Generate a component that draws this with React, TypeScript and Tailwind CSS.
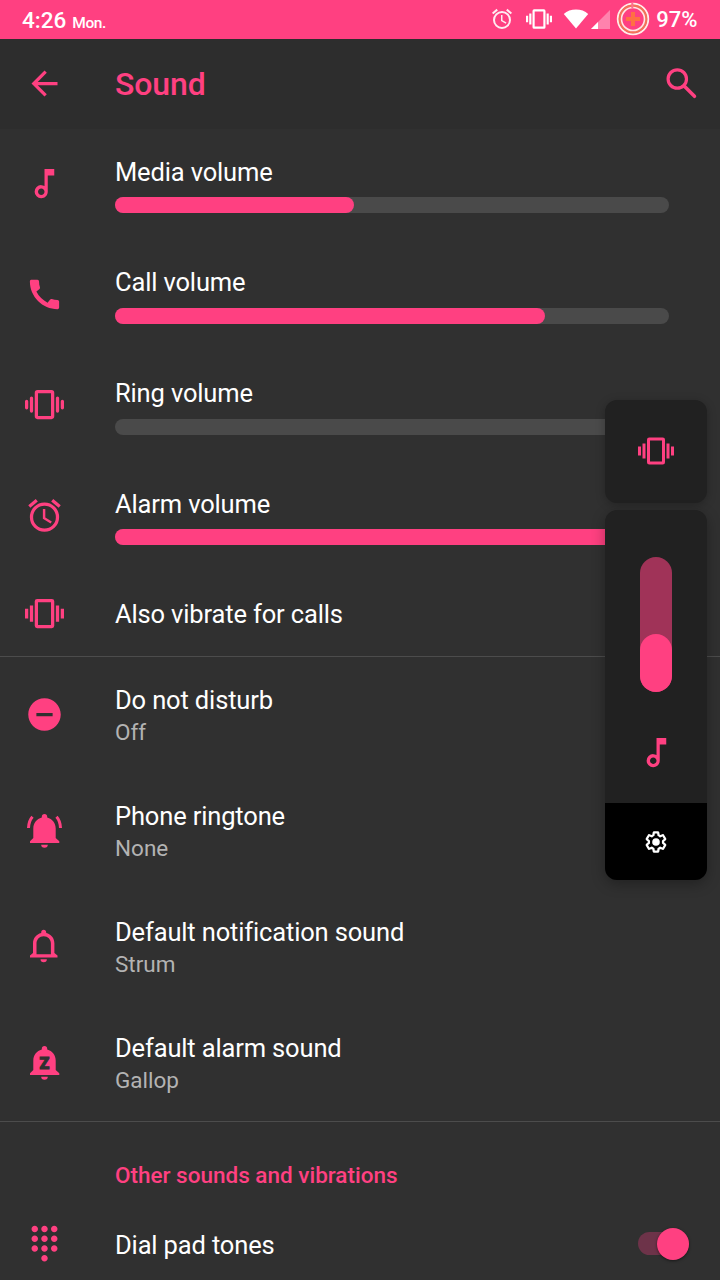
import type { ReactNode } from "react";
import { MdArrowBack, MdCall, MdDialpad, MdOutlineMusicNote, MdRemoveCircle } from "react-icons/md";

const iconClass = "w-[39px] h-[39px]";
const titleClass = "text-[25.5px] leading-[30px] tracking-[-0.15px]";

function AlarmIcon({ className }: { className: string }) {
  return (
    <svg viewBox="0 0 24 24" fill="currentColor" className={className}>
      <path d="M12 20a7 7 0 0 1-7-7 7 7 0 0 1 7-7 7 7 0 0 1 7 7 7 7 0 0 1-7 7m0-16a9 9 0 0 0-9 9 9 9 0 0 0 9 9 9 9 0 0 0 9-9 9 9 0 0 0-9-9m.5 4H11v6l4.75 2.85.75-1.23-4-2.37V8M7.88 3.39L6.6 1.86 2 5.71l1.29 1.53 4.59-3.85M22 5.72l-4.6-3.86-1.29 1.53 4.6 3.86L22 5.72z" />
    </svg>
  );
}

// Phone with rounded vibration bars
function RingVibrateIcon() {
  return (
    <svg viewBox="0 0 24 24" fill="none" stroke="currentColor" strokeWidth="2" strokeLinecap="round" className="-mt-px h-[39px] w-[39px]">
      <rect x="7" y="4" width="10" height="16" rx="0.7" />
      <path d="M1 10v4M4 8v8M20 8v8M23 10v4" />
    </svg>
  );
}

// Phone with square vibration bars
function VibrateIcon({ className }: { className: string }) {
  return (
    <svg viewBox="0 0 24 24" fill="none" stroke="currentColor" strokeWidth="2" className={className}>
      <rect x="7" y="4" width="10" height="16" rx="0.5" />
      <path d="M1 9v6M4 7v10M20 7v10M23 9v6" />
    </svg>
  );
}

const bellBody =
  "M19.5 3c-1.6 0-2.7 1.1-2.7 2.7v.9C11.6 8 8.3 12.2 8.3 17.5V27L5 30.2V32h29.3v-1.8L30.7 27v-9.5c0-5.3-3.3-9.5-8.5-10.9v-.9c0-1.6-1.1-2.7-2.7-2.7z";

function BellIcon({ children }: { children?: ReactNode }) {
  return (
    <svg viewBox="0 0 39 39" fill="currentColor" className={iconClass}>
      <path d={bellBody} />
      <path d="M16.2 33.8h6.6a3.3 3 0 0 1-6.6 0z" />
      {children}
    </svg>
  );
}

function BellOutlineIcon() {
  return (
    <svg viewBox="0 0 39 39" fill="currentColor" className={iconClass}>
      <path
        fillRule="evenodd"
        d="M18.7 2.8c-1.5 0-2.5 1-2.5 2.4v.8C11.3 7.2 8 11.1 8 16.3V26L5 28.5V30.5h27.5v-2L29.4 26v-9.7c0-5.2-3.2-9.1-8.2-10.3v-.8C21.2 3.8 20.2 2.8 18.7 2.8zM11.5 27.2V16.5c0-4.2 3.1-7.3 7.2-7.3s7.2 3.1 7.2 7.3v10.7z"
      />
      <path d="M15.5 32.3h6.4a3.2 3 0 0 1-6.4 0z" />
    </svg>
  );
}

function SearchIcon() {
  return (
    <svg viewBox="0 0 32 32" fill="none" stroke="currentColor" className="w-8 h-8">
      <circle cx="11.3" cy="11" r="9.2" strokeWidth="3.2" />
      <path d="M18.2 18l10.3 10.3" strokeWidth="3.5" strokeLinecap="round" />
    </svg>
  );
}

function GearIcon() {
  return (
    <svg viewBox="0 0 24 24" className="h-[26px] w-[26px] text-white">
      <path
        transform="translate(.6 .6) scale(.95)"
        fill="none"
        stroke="currentColor"
        strokeWidth="2.2"
        strokeLinejoin="round"
        d="M18.8 12.9c.06-.3.06-.6.06-.9s0-.6-.06-.9l2-1.6c.18-.14.22-.4.11-.6l-1.9-3.2c-.1-.2-.35-.28-.56-.2l-2.35.9c-.5-.37-1-.69-1.6-.92l-.36-2.5c-.04-.23-.23-.38-.46-.38h-3.4c-.23 0-.42.15-.46.38l-.36 2.5c-.6.23-1.1.55-1.6.92l-2.35-.9c-.21-.08-.46 0-.56.2l-1.9 3.2c-.11.2-.07.46.11.6l2 1.6c-.06.3-.06.6-.06.9s0 .6.06.9l-2 1.6c-.18.14-.22.4-.11.6l1.9 3.2c.1.2.35.28.56.2l2.35-.9c.5.37 1 .69 1.6.92l.36 2.5c.04.23.23.38.46.38h3.4c.23 0 .42-.15.46-.38l.36-2.5c.6-.23 1.1-.55 1.6-.92l2.35.9c.21.08.46 0 .56-.2l1.9-3.2c.11-.2.07-.46-.11-.6z"
      />
      <circle cx="12" cy="12" r="3.5" fill="currentColor" />
    </svg>
  );
}

function StatusBar() {
  return (
    <header className="flex h-[39px] items-center bg-[#ff4081] pl-[22px] pr-[22.5px] text-white">
      <div className="flex flex-1 items-baseline gap-1.5 pt-px font-medium">
        <span className="text-[22.5px] leading-none">4:26</span>
        <span className="text-[15.5px] leading-none tracking-[-0.4px]">Mon.</span>
      </div>
      <AlarmIcon className="-mt-px mr-[12px] h-6 w-6 opacity-90" />
      <VibrateIcon className="-mt-px mr-[11px] h-[26px] w-[26px]" />
      <svg viewBox="0 0 26 20" className="-mt-px mr-[2px] h-5 w-[26px]">
        <path d="M13 19.5L.8 4.9C4 2 8.3.6 13 .6s9 1.4 12.2 4.3z" fill="white" />
      </svg>
      <svg viewBox="0 0 19 19" className="mr-[6px] h-[19px] w-[19px]">
        <path d="M0 19L19 0v19z" fill="white" opacity="0.35" />
        <path d="M0 19l7-7v7z" fill="white" />
      </svg>
      <svg viewBox="0 0 34 34" fill="none" className="-mt-px mr-[6.5px] h-[34px] w-[34px]">
        <circle cx="17" cy="17" r="15.3" stroke="#fff0e8" strokeWidth="1.8" />
        <circle cx="17" cy="17" r="13.3" stroke="#f07a52" strokeWidth="1.8" />
        <circle cx="17" cy="17" r="11.5" stroke="#ffe9e4" strokeWidth="1.6" />
        <path d="M16.3 1v5" stroke="#ff6f8f" strokeWidth="2" />
        <path d="M17 10v14M10 17h14" stroke="#ff7043" strokeWidth="4" />
      </svg>
      <span className="pt-px text-[22px] font-medium leading-none">97%</span>
    </header>
  );
}

type VolumeRowProps = { icon: ReactNode; label: string; value: number };

function VolumeRow({ icon, label, value }: VolumeRowProps) {
  return (
    <div className="flex h-[110.7px]">
      <div className="flex w-[115px] items-center pl-[25px]">{icon}</div>
      <div className="w-[554px] pt-[28.2px]">
        <p className={titleClass}>{label}</p>
        <div className="mt-[10.5px] h-4 rounded-full bg-[#4a4a4a]">
          {value > 0 && <div className="h-4 rounded-full bg-[#ff4081]" style={{ width: `${value}%` }} />}
        </div>
      </div>
    </div>
  );
}

type SettingRowProps = { icon: ReactNode; title: string; summary: string };

function SettingRow({ icon, title, summary }: SettingRowProps) {
  return (
    <div className="flex h-[115.9px]">
      <div className="flex w-[115px] items-center pb-px pl-[25px]">{icon}</div>
      <div className="pt-[28.2px]">
        <p className={titleClass}>{title}</p>
        <p className="mt-[3px] text-[22.5px] leading-[28px] text-[#b3b3b3]">{summary}</p>
      </div>
    </div>
  );
}

function VolumePanel() {
  return (
    <aside className="absolute left-[605px] top-[400px] flex w-[102px] flex-col gap-[7px]">
      <div className="flex h-[103px] items-center justify-center rounded-xl bg-[#212121] pb-px shadow-[0_2px_10px_rgba(0,0,0,0.25)]">
        <VibrateIcon className="h-9 w-9" />
      </div>
      <div className="flex h-[370px] flex-col items-center overflow-hidden rounded-xl bg-[#212121] pt-[47px] shadow-[0_4px_14px_rgba(0,0,0,0.3)]">
        <div className="flex h-[135px] w-8 flex-col justify-end rounded-full bg-[#a03358]">
          <div className="h-[58px] rounded-full bg-[#ff4081]" />
        </div>
        <MdOutlineMusicNote className="mt-[41px] h-[39px] w-[39px] shrink-0" />
        <button className="mt-auto flex h-[77px] w-full shrink-0 items-center justify-center bg-black">
          <GearIcon />
        </button>
      </div>
    </aside>
  );
}

export default function App() {
  return (
    <main className="relative h-[1280px] w-[720px] overflow-hidden bg-[#303030] font-[Roboto,sans-serif] text-[#ff4081]">
      <StatusBar />
      <nav className="flex h-[89.5px] items-center bg-[#2d2d2d] pl-[25px] pr-[22px]">
        <MdArrowBack className={iconClass} />
        <h1 className="ml-[51px] flex-1 pt-px text-[32px] font-medium leading-none tracking-[-0.1px]">Sound</h1>
        <SearchIcon />
      </nav>

      <section className="text-white [&_svg]:text-[#ff4081]">
        <VolumeRow icon={<MdOutlineMusicNote className={iconClass} />} label="Media volume" value={43.1} />
        <VolumeRow icon={<MdCall className={iconClass} />} label="Call volume" value={77.7} />
        <VolumeRow icon={<RingVibrateIcon />} label="Ring volume" value={0} />
        <VolumeRow icon={<AlarmIcon className={iconClass} />} label="Alarm volume" value={100} />
        <div className="flex h-[85.7px] items-center border-b border-[#4c4c4c] pl-[25px]">
          <VibrateIcon className={iconClass} />
          <p className={`ml-[51px] pt-px ${titleClass}`}>Also vibrate for calls</p>
        </div>
      </section>

      <section className="border-b border-[#4c4c4c] text-white [&_svg]:text-[#ff4081]">
        <SettingRow icon={<MdRemoveCircle className={iconClass} />} title="Do not disturb" summary="Off" />
        <SettingRow
          icon={
            <BellIcon>
              <path d="M7.5 5.8C4.9 8.7 3.7 12 3.5 17M31.5 5.8c2.6 2.9 3.8 6.2 4 11.2" fill="none" stroke="currentColor" strokeWidth="3" />
            </BellIcon>
          }
          title="Phone ringtone"
          summary="None"
        />
        <SettingRow icon={<BellOutlineIcon />} title="Default notification sound" summary="Strum" />
        <SettingRow
          icon={
            <BellIcon>
              <text x="19.5" y="25.5" textAnchor="middle" fontSize="16" fontWeight="900" fill="#303030" stroke="#303030" strokeWidth="1">
                Z
              </text>
            </BellIcon>
          }
          title="Default alarm sound"
          summary="Gallop"
        />
      </section>

      <section>
        <h2 className="pl-[115px] pt-[39px] text-[22.5px] font-medium leading-[28px]">Other sounds and vibrations</h2>
        <div className="mt-[12px] flex h-[86px] items-center pl-[25px] pr-[31px]">
          <MdDialpad className={iconClass} />
          <p className={`ml-[51px] flex-1 pt-0.5 text-white ${titleClass}`}>Dial pad tones</p>
          <div className="flex h-[23px] w-[51px] items-center justify-end rounded-full bg-[#6d3349]">
            <div className="h-8 w-8 shrink-0 rounded-full bg-[#ff4081] shadow-[0_1px_3px_rgba(0,0,0,0.5)]" />
          </div>
        </div>
      </section>

      <VolumePanel />
    </main>
  );
}
